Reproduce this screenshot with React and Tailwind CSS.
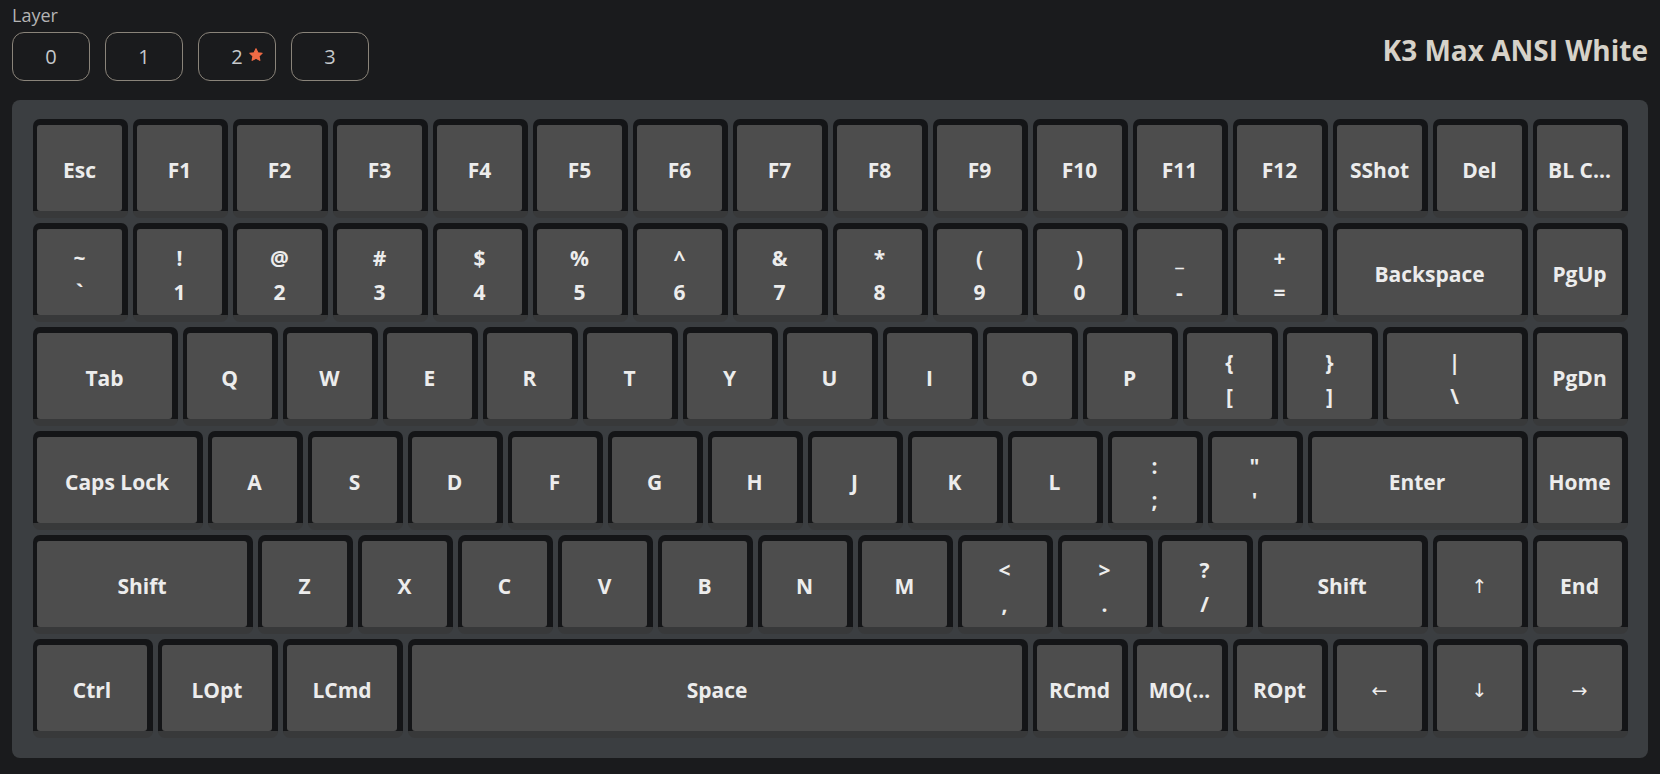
import React from 'react'

const W = {
  1: 'w-[95px]',
  1.25: 'w-[120px]',
  1.5: 'w-[145px]',
  1.75: 'w-[170px]',
  2: 'w-[195px]',
  2.25: 'w-[220px]',
  6.25: 'w-[620px]',
}

const k = (l, u = 1) => ({ l, u })
const d = (t, b, u = 1) => ({ t, b, u })
const arrows = ['←', '↑', '↓', '→']

const rows = [
  [k('Esc'), k('F1'), k('F2'), k('F3'), k('F4'), k('F5'), k('F6'), k('F7'), k('F8'), k('F9'), k('F10'), k('F11'), k('F12'), k('SShot'), k('Del'), k('BL C…')],
  [d('~', '`'), d('!', '1'), d('@', '2'), d('#', '3'), d('$', '4'), d('%', '5'), d('^', '6'), d('&', '7'), d('*', '8'), d('(', '9'), d(')', '0'), d('_', '-'), d('+', '='), k('Backspace', 2), k('PgUp')],
  [k('Tab', 1.5), k('Q'), k('W'), k('E'), k('R'), k('T'), k('Y'), k('U'), k('I'), k('O'), k('P'), d('{', '['), d('}', ']'), d('|', '\\', 1.5), k('PgDn')],
  [k('Caps Lock', 1.75), k('A'), k('S'), k('D'), k('F'), k('G'), k('H'), k('J'), k('K'), k('L'), d(':', ';'), d('"', "'"), k('Enter', 2.25), k('Home')],
  [k('Shift', 2.25), k('Z'), k('X'), k('C'), k('V'), k('B'), k('N'), k('M'), d('<', ','), d('>', '.'), d('?', '/'), k('Shift', 1.75), k('↑'), k('End')],
  [k('Ctrl', 1.25), k('LOpt', 1.25), k('LCmd', 1.25), k('Space', 6.25), k('RCmd'), k('MO(…'), k('ROpt'), k('←'), k('↓'), k('→')],
]

const Key = ({ def }) => (
  <div className={`${W[def.u]} h-[99px] shrink-0 flex rounded-[7px] bg-[#141517] pt-[6px] pl-[4px] pr-[6px] border-b-[7px] border-b-[#38393a]`}>
    <div className="flex-1 rounded-[3px] bg-[#4d4d4d] flex flex-col items-center justify-center pt-[3px] text-[#ececec] font-bold text-[21px]">
      {def.l ? (
        arrows.includes(def.l) ? (
          <span className="leading-[28px] font-normal font-['DejaVu_Sans',sans-serif] text-[19px]">{def.l}</span>
        ) : (
          <span className="leading-[28px] whitespace-nowrap">{def.l}</span>
        )
      ) : (
        <div className="flex flex-col items-center gap-[6px] pt-[3px]">
          <span className="leading-[28px]">{def.t}</span>
          <span className="leading-[28px]">{def.b}</span>
        </div>
      )}
    </div>
  </div>
)

const Star = () => (
  <svg viewBox="0 0 24 24" className="w-[16px] h-[16px]">
    <path
      d="M12 2.5l2.9 6 6.4.8-4.7 4.4 1.2 6.4L12 17l-5.8 3.1 1.2-6.4L2.7 9.3l6.4-.8z"
      fill="#f26b45"
      stroke="#f26b45"
      strokeWidth="1.6"
      strokeLinejoin="round"
    />
  </svg>
)

export default function App() {
  return (
    <div className="w-full h-[774px] bg-[#1a1b1d] px-3 font-['Open_Sans',sans-serif] overflow-hidden">
      <div className="flex justify-between">
        <div className="pt-[3px]">
          <div className="text-[18px] leading-[24px] text-[#b4b4b4]">Layer</div>
          <div className="flex gap-[15px] mt-[5px] mb-[19px]">
            {['0', '1', '2', '3'].map((n) => (
              <button
                key={n}
                className="relative w-[78px] h-[49px] rounded-[12px] border-[1.5px] border-[#8a847a] text-[20px] text-[#c6c9cc] flex items-center justify-center"
              >
                {n}
                {n === '2' && (
                  <span className="absolute left-[49px] top-[14px]">
                    <Star />
                  </span>
                )}
              </button>
            ))}
          </div>
        </div>
        <div className="pt-[31px] text-[28px] leading-[38px] font-bold text-[#d6d2c9]">K3 Max ANSI White</div>
      </div>

      <div className="w-[1636px] rounded-[8px] bg-[#3b3e41] pt-[19px] pl-[21px] pr-[20px] pb-[20px] flex flex-col gap-[5px]">
        {rows.map((row, i) => (
          <div key={i} className="flex gap-[5px]">
            {row.map((def, j) => (
              <Key key={j} def={def} />
            ))}
          </div>
        ))}
      </div>
    </div>
  )
}
